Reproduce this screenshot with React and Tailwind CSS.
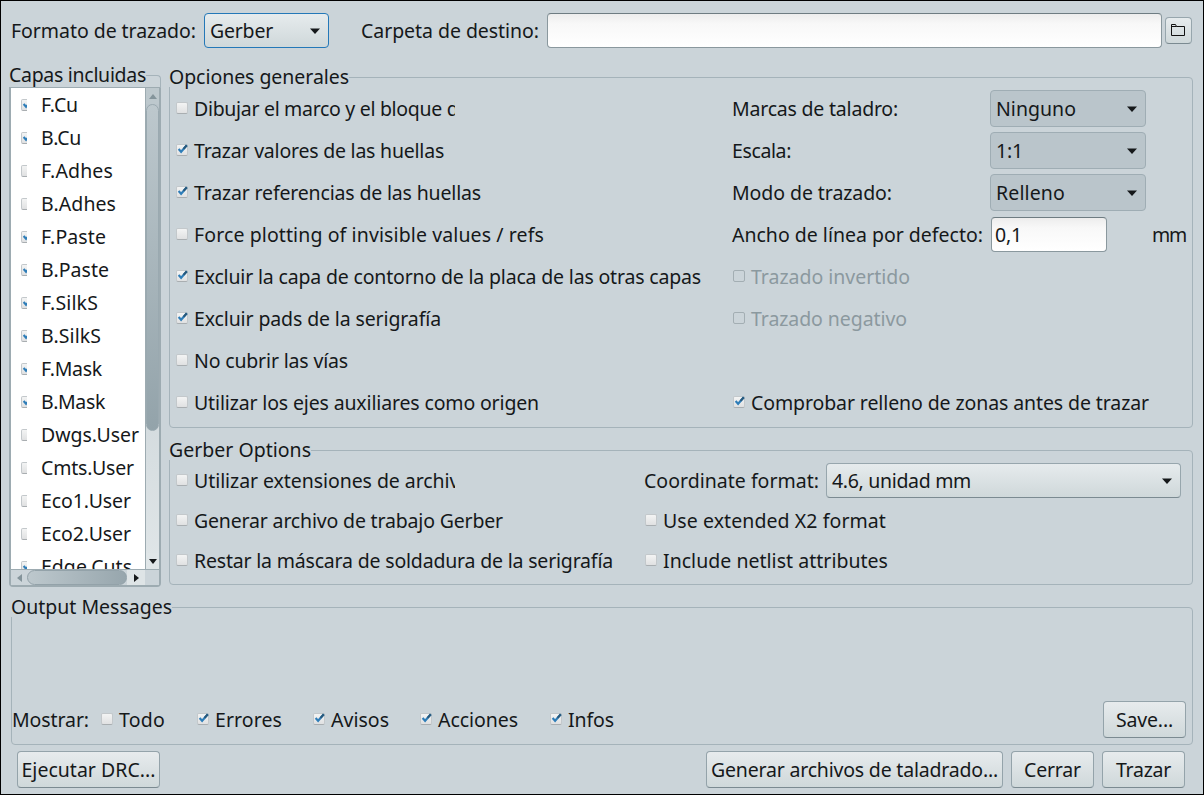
import { useLayoutEffect, useRef, useState } from "react";

// Text whose letter spacing is tuned so that it fills a known advance width.
function Txt({ w, children, className = "" }) {
  const ref = useRef(null);
  const [spacing, setSpacing] = useState(0);
  useLayoutEffect(() => {
    if (!w) return;
    const natural = ref.current.getBoundingClientRect().width - spacing * children.length;
    setSpacing((w - natural) / children.length);
  }, [w, children]);
  return (
    <span ref={ref} className={"inline-block shrink-0 whitespace-pre " + className} style={{ letterSpacing: spacing + "px" }}>
      {children}
    </span>
  );
}

function Check({ on, disabled }) {
  if (disabled) return <span className="-mt-0.5 size-3 shrink-0 rounded-[2px] border border-[#a3aeb3]" />;
  return (
    <span className="-mt-0.5 size-3 shrink-0 rounded-[2px] border border-[#c3c8cb] border-b-[#a9aeb1] bg-linear-to-b from-[#f3f4f4] to-[#e0e1e2]">
      {on && (
        <svg viewBox="0 0 12 12" className="-m-px block size-3 overflow-visible">
          <path d="M2.6 5 5.1 7.8 10.8 1.2" fill="none" stroke="#2e7db8" strokeWidth="2.1" />
          <path d="M7.6 4.9 10.8 1.2" fill="none" stroke="#28597c" strokeWidth="2.1" />
        </svg>
      )}
    </span>
  );
}

function Option({ w, on, disabled, clip, children, className = "" }) {
  return (
    <label className={"flex items-center gap-1.5 " + className}>
      <Check on={on} disabled={disabled} />
      <span className={(clip ? "flex h-7 w-[261px] items-center overflow-hidden " : "") + (disabled ? "text-[#8b999f]" : "")}>
        <Txt w={w}>{children}</Txt>
      </span>
    </label>
  );
}

function Caret() {
  return (
    <svg viewBox="0 0 10 6" className="h-1.5 w-2.5 shrink-0">
      <path d="M0 .5h10L5 6z" fill="#15181a" />
    </svg>
  );
}

function Select({ w, flat, focus, className, children }) {
  return (
    <div
      className={
        "flex shrink-0 items-center justify-between rounded-[4px] border pl-[5px] " +
        (flat
          ? "mb-px h-[37px] border-[#9fadb4] bg-[#bac5cb] "
          : "h-[35px] bg-linear-to-b from-[#e6ebed] to-[#cfd8da] " +
            (focus ? "border-[#2478b8] " : "border-[#97a6ad] border-b-[#7b8a91] ")) +
        className
      }
    >
      <Txt w={w}>{children}</Txt>
      <Caret />
    </div>
  );
}

function Button({ w, className, children }) {
  return (
    <button className={"flex h-[37px] shrink-0 items-center justify-center rounded-[4px] border border-[#94a3aa] border-b-[#7b8a91] bg-linear-to-b from-[#e7ebed] to-[#cfd8da] " + className}>
      <Txt w={w}>{children}</Txt>
    </button>
  );
}

function Group({ title, w, className, children }) {
  return (
    <section className={"flex flex-col rounded-[4px] border border-[#a5b3ba] " + className}>
      <div className="-mt-[11px] mb-px -ml-px flex h-5 w-fit shrink-0 items-center bg-[#cbd4d9]">
        <Txt w={w}>{title}</Txt>
      </div>
      {children}
    </section>
  );
}

const field = "shrink-0 rounded-[4px] border border-[#8a989e] border-t-[#6e7c82] bg-linear-to-b from-[#ededed] via-[#f8f8f8] via-30% to-white";

const layers = [
  ["F.Cu", 37, true],
  ["B.Cu", 40, true],
  ["F.Adhes", 72, false],
  ["B.Adhes", 75, false],
  ["F.Paste", 65, true],
  ["B.Paste", 68, true],
  ["F.SilkS", 57, true],
  ["B.SilkS", 60, true],
  ["F.Mask", 61, true],
  ["B.Mask", 64, true],
  ["Dwgs.User", 98, false],
  ["Cmts.User", 93, false],
  ["Eco1.User", 90, false],
  ["Eco2.User", 90, false],
  ["Edge.Cuts", 91, true],
];

function LayerList() {
  return (
    <section className="w-[152px] shrink-0 pt-[10px]">
      <div className="flex h-[13px] items-start">
        <div className="-mt-[10px] flex h-5 items-center">
          <Txt w={137}>Capas incluidas</Txt>
        </div>
        <div className="h-[13px] flex-1 rounded-tr-[4px] border-t border-r border-[#a5b3ba]" />
      </div>
      <div className="-mt-px h-[500px] w-[152px] rounded-b-[4px] border-2 border-t border-[#9dabb1] bg-[#cbd4d9]">
        <div className="flex h-[481px]">
          <div className="w-[134px] overflow-hidden bg-white">
            {layers.map(([name, w, on]) => (
              <div key={name} className="flex h-[33px] items-center pl-[10px]">
                <span className="flex w-1.5 overflow-hidden pt-0.5">
                  <Check on={on} />
                </span>
                <Txt w={w} className="ml-[14px] pt-px">
                  {name}
                </Txt>
              </div>
            ))}
          </div>
          <div className="flex w-[14px] flex-col border-l border-[#9dabb1] bg-linear-to-b from-[#b9c4ca] to-[#e0e6e8]">
            <div className="flex h-4 shrink-0 items-center justify-center bg-[#bdc8cd]">
              <svg viewBox="0 0 8 5" className="h-[5px] w-2">
                <path d="M4 0 8 5H0z" fill="#84949b" />
              </svg>
            </div>
            <div className="h-[327px] shrink-0 rounded-full border border-[#9aa9b0] bg-linear-to-b from-[#bdc8cd] to-[#93a3aa]" />
            <div className="flex-1" />
            <div className="flex h-4 shrink-0 items-center justify-center bg-[#e0e6e8]">
              <svg viewBox="0 0 8 5" className="h-[5px] w-2">
                <path d="M0 0h8L4 5z" fill="#15181a" />
              </svg>
            </div>
          </div>
        </div>
        <div className="flex h-4 items-center border-t border-[#9dabb1] bg-[#cbd4d9]">
          <div className="flex w-4 justify-center">
            <svg viewBox="0 0 5 8" className="h-2 w-[5px]">
              <path d="M5 0v8L0 4z" fill="#84949b" />
            </svg>
          </div>
          <div className="h-[15px] w-[100px] rounded-full border border-[#93a2a9] bg-linear-to-r from-[#bdc8cd] to-[#97a6ad]" />
          <div className="flex h-full w-[18px] items-center justify-center bg-[#dee4e6]">
            <svg viewBox="0 0 5 8" className="h-2 w-[5px]">
              <path d="M0 0v8l5-4z" fill="#15181a" />
            </svg>
          </div>
        </div>
      </div>
    </section>
  );
}

export default function App() {
  return (
    <main className="flex h-[795px] w-[1204px] flex-col overflow-hidden border border-black bg-[#cbd4d9] font-['Noto_Sans',sans-serif] text-[19.5px] leading-5 text-[#15181a]">
      <header className="flex h-[47px] shrink-0 items-center pt-3 pl-[10px]">
        <Txt w={185}>Formato de trazado:</Txt>
        <Select w={63} focus className="ml-2 w-[125px] pr-[8px]">
          Gerber
        </Select>
        <Txt w={178} className="ml-8">
          Carpeta de destino:
        </Txt>
        <div className={"ml-2 h-[35px] w-[615px] " + field} />
        <button className="ml-[3px] flex size-[27px] shrink-0 items-center justify-center rounded-[4px] border border-[#97a6ad] border-b-[#7b8a91] bg-linear-to-b from-[#e6ebed] to-[#cfd8da]">
          <svg viewBox="0 0 14 12" className="mr-px mb-px h-3 w-3.5 overflow-visible">
            <path d="M.5 11.5V.5h4l1 2h8v9z" fill="none" stroke="#111" strokeLinejoin="round" />
            <path d="M.5 2.5h5" fill="none" stroke="#111" />
          </svg>
        </button>
      </header>

      <div className="flex h-[538px] shrink-0 pt-[17px] pl-2">
        <LayerList />
        <div className="ml-2 flex w-[1024px] flex-col pt-3">
          <Group title="Opciones generales" w={180} className="h-[351px]">
            <div className="flex">
              <div className="flex w-[562px] shrink-0 flex-col pl-1.5 *:h-[42px]">
                <Option w={335} clip>Dibujar el marco y el bloque de títulos</Option>
                <Option w={250} on>Trazar valores de las huellas</Option>
                <Option w={287} on>Trazar referencias de las huellas</Option>
                <Option w={350}>Force plotting of invisible values / refs</Option>
                <Option w={507} on>Excluir la capa de contorno de la placa de las otras capas</Option>
                <Option w={247} on>Excluir pads de la serigrafía</Option>
                <Option w={154}>No cubrir las vías</Option>
                <Option w={345}>Utilizar los ejes auxiliares como origen</Option>
              </div>
              <div className="flex flex-col *:h-[42px]">
                <div className="flex items-center">
                  <div className="w-[258px]"><Txt w={166}>Marcas de taladro:</Txt></div>
                  <Select flat w={80} className="w-[156px] pr-[8px]">Ninguno</Select>
                </div>
                <div className="flex items-center">
                  <div className="w-[258px]"><Txt w={59}>Escala:</Txt></div>
                  <Select flat w={27} className="w-[156px] pr-[8px]">1:1</Select>
                </div>
                <div className="flex items-center">
                  <div className="w-[258px]"><Txt w={160}>Modo de trazado:</Txt></div>
                  <Select flat w={69} className="w-[156px] pr-[8px]">Relleno</Select>
                </div>
                <div className="flex items-center">
                  <div className="w-[259px]"><Txt w={251}>Ancho de línea por defecto:</Txt></div>
                  <div className={"mb-px flex h-[35px] w-[116px] items-center pl-[3px] " + field}>
                    <Txt w={27}>0,1</Txt>
                  </div>
                  <Txt w={34} className="ml-[45px]">mm</Txt>
                </div>
                <Option w={159} disabled className="pl-px">Trazado invertido</Option>
                <Option w={156} disabled className="pl-px">Trazado negativo</Option>
                <div />
                <Option w={398} on className="pl-px">Comprobar relleno de zonas antes de trazar</Option>
              </div>
            </div>
          </Group>

          <Group title="Gerber Options" w={142} className="mt-[22px] h-[135px] shrink-0">
            <div className="flex">
              <div className="flex w-[474px] shrink-0 flex-col pl-1.5 *:h-10">
                <Option w={336} clip>Utilizar extensiones de archivo Protel</Option>
                <Option w={309}>Generar archivo de trabajo Gerber</Option>
                <Option w={419}>Restar la máscara de soldadura de la serigrafía</Option>
              </div>
              <div className="flex flex-col *:h-10">
                <div className="flex items-center">
                  <Txt w={175}>Coordinate format:</Txt>
                  <Select w={139} className="mb-px ml-[7px] w-[355px] pr-[8px]">4.6, unidad mm</Select>
                </div>
                <Option w={223} className="pl-px">Use extended X2 format</Option>
                <Option w={225} className="pl-px">Include netlist attributes</Option>
              </div>
            </div>
          </Group>
        </div>
      </div>

      <Group title="Output Messages" w={161} className="mt-[21px] ml-[10px] h-[138px] w-[1182px] shrink-0">
        <div className="flex-1" />
        <div className="mb-[5px] flex h-[38px] items-center">
          <Txt w={77}>Mostrar:</Txt>
          <Option w={46} className="ml-3 w-24">Todo</Option>
          <Option w={67} on className="w-[116px]">Errores</Option>
          <Option w={58} on className="w-[107px]">Avisos</Option>
          <Option w={80} on className="w-[130px]">Acciones</Option>
          <Option w={46} on>Infos</Option>
          <Button w={57} className="mr-1.5 mb-px ml-auto w-[83px]">Save...</Button>
        </div>
      </Group>

      <footer className="mt-1.5 flex shrink-0 pl-4">
        <Button w={134} className="w-[143px]">Ejecutar DRC...</Button>
        <Button w={287} className="ml-[546px] w-[297px]">Generar archivos de taladrado...</Button>
        <Button w={57} className="ml-2 w-[83px]">Cerrar</Button>
        <Button w={55} className="ml-2 w-[83px]">Trazar</Button>
      </footer>
    </main>
  );
}
